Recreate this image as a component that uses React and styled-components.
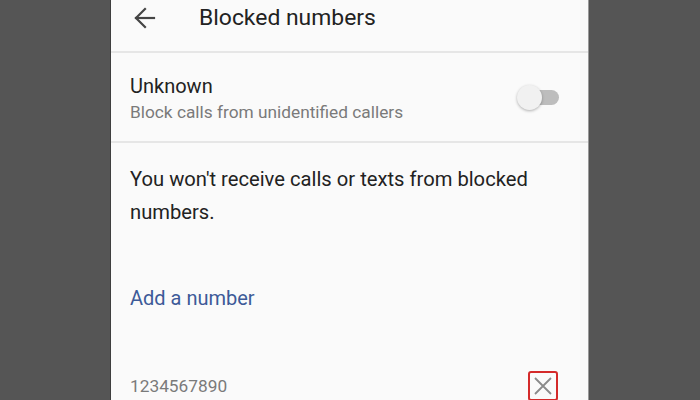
import React from 'react'
import styled, { createGlobalStyle } from 'styled-components'

const GlobalStyle = createGlobalStyle`
    html, body {
        margin: 0;
        padding: 0;
        background: #555555;
    }
    body {
        font-family: Roboto, "Noto Sans", Arial, sans-serif;
    }
`

const BackIcon = () => (
    <svg width="22" height="22" viewBox="0 0 22 22" fill="none" stroke="#454545" strokeWidth="2.2" strokeLinecap="square">
        <path d="M2 11h18" />
        <path d="M11 2l-9 9 9 9" />
    </svg>
)

const CloseIcon = () => (
    <svg width="20" height="20" viewBox="0 0 20 20" fill="none" stroke="#8a8a8a" strokeWidth="1.8">
        <path d="M2 2l16 16M18 2L2 18" />
    </svg>
)

const App = () => {
    return (
        <>
            <GlobalStyle />
            <Screen>
                <Panel>
                    <Header>
                        <BackButton><BackIcon /></BackButton>
                        <Title>Blocked numbers</Title>
                    </Header>

                    <SettingRow>
                        <SettingText>
                            <SettingLabel>Unknown</SettingLabel>
                            <SettingHint>Block calls from unidentified callers</SettingHint>
                        </SettingText>
                        <Toggle>
                            <Thumb />
                        </Toggle>
                    </SettingRow>

                    <Content>
                        <Message>You won't receive calls or texts from blocked numbers.</Message>
                        <AddLink>Add a number</AddLink>
                        <NumberRow>
                            <NumberText>1234567890</NumberText>
                            <RemoveButton><CloseIcon /></RemoveButton>
                        </NumberRow>
                    </Content>
                </Panel>
            </Screen>
        </>
    )
}

export default App


const Screen = styled.div`
    width: 700px;
    height: 400px;
    display: flex;
    justify-content: center;
    background: #555555;
    overflow: hidden;
`

const Panel = styled.div`
    width: 477px;
    height: 400px;
    margin-left: -1px;
    background: #fafafa;
    border-left: 1px solid #3f3f3f;
    border-right: 1px solid #9a9a9a;
    overflow: hidden;
`

const Header = styled.div`
    display: flex;
    align-items: center;
    height: 35px;
    padding-bottom: 16px;
    border-bottom: 2px solid #e6e6e6;
`

const BackButton = styled.div`
    display: flex;
    width: 22px;
    margin: 0 43px 0 23px;
`

const Title = styled.h1`
    margin: 0;
    font-size: 22.9px;
    font-weight: 400;
    color: #222222;
`

const SettingRow = styled.div`
    display: flex;
    align-items: center;
    justify-content: space-between;
    height: 88px;
    padding: 0 29px 0 19px;
    border-bottom: 2px solid #e6e6e6;
`

const SettingText = styled.div`
    display: flex;
    flex-direction: column;
    gap: 3px;
    padding-top: 2px;
`

const SettingLabel = styled.span`
    font-size: 20px;
    line-height: 24px;
    color: #222222;
`

const SettingHint = styled.span`
    font-size: 17.3px;
    line-height: 22px;
    color: #7a7a7a;
`

const Toggle = styled.div`
    position: relative;
    width: 36px;
    height: 15px;
    margin-top: 1px;
    border-radius: 8px;
    background: #bdbdbd;
`

const Thumb = styled.div`
    position: absolute;
    left: -6px;
    top: 50%;
    width: 25px;
    height: 25px;
    margin-top: -12.5px;
    border-radius: 50%;
    background: #f1f1f1;
    box-shadow: 0 1px 3px rgba(0, 0, 0, 0.3);
`

const Content = styled.div`
    display: flex;
    flex-direction: column;
    padding: 20px 19px 0;
`

const Message = styled.p`
    margin: 0;
    font-size: 20.2px;
    line-height: 33px;
    color: #222222;
`

const AddLink = styled.span`
    margin-top: 57px;
    font-size: 20px;
    line-height: 24px;
    color: #3d5a98;
`

const NumberRow = styled.div`
    display: flex;
    align-items: center;
    justify-content: space-between;
    margin-top: 61px;
    padding-right: 11px;
`

const NumberText = styled.span`
    font-size: 17.3px;
    line-height: 20px;
    color: #7a7a7a;
`

const RemoveButton = styled.div`
    display: flex;
    align-items: center;
    justify-content: center;
    width: 26px;
    height: 26px;
    border: 2px solid #d42a2a;
    border-radius: 3px;
`
